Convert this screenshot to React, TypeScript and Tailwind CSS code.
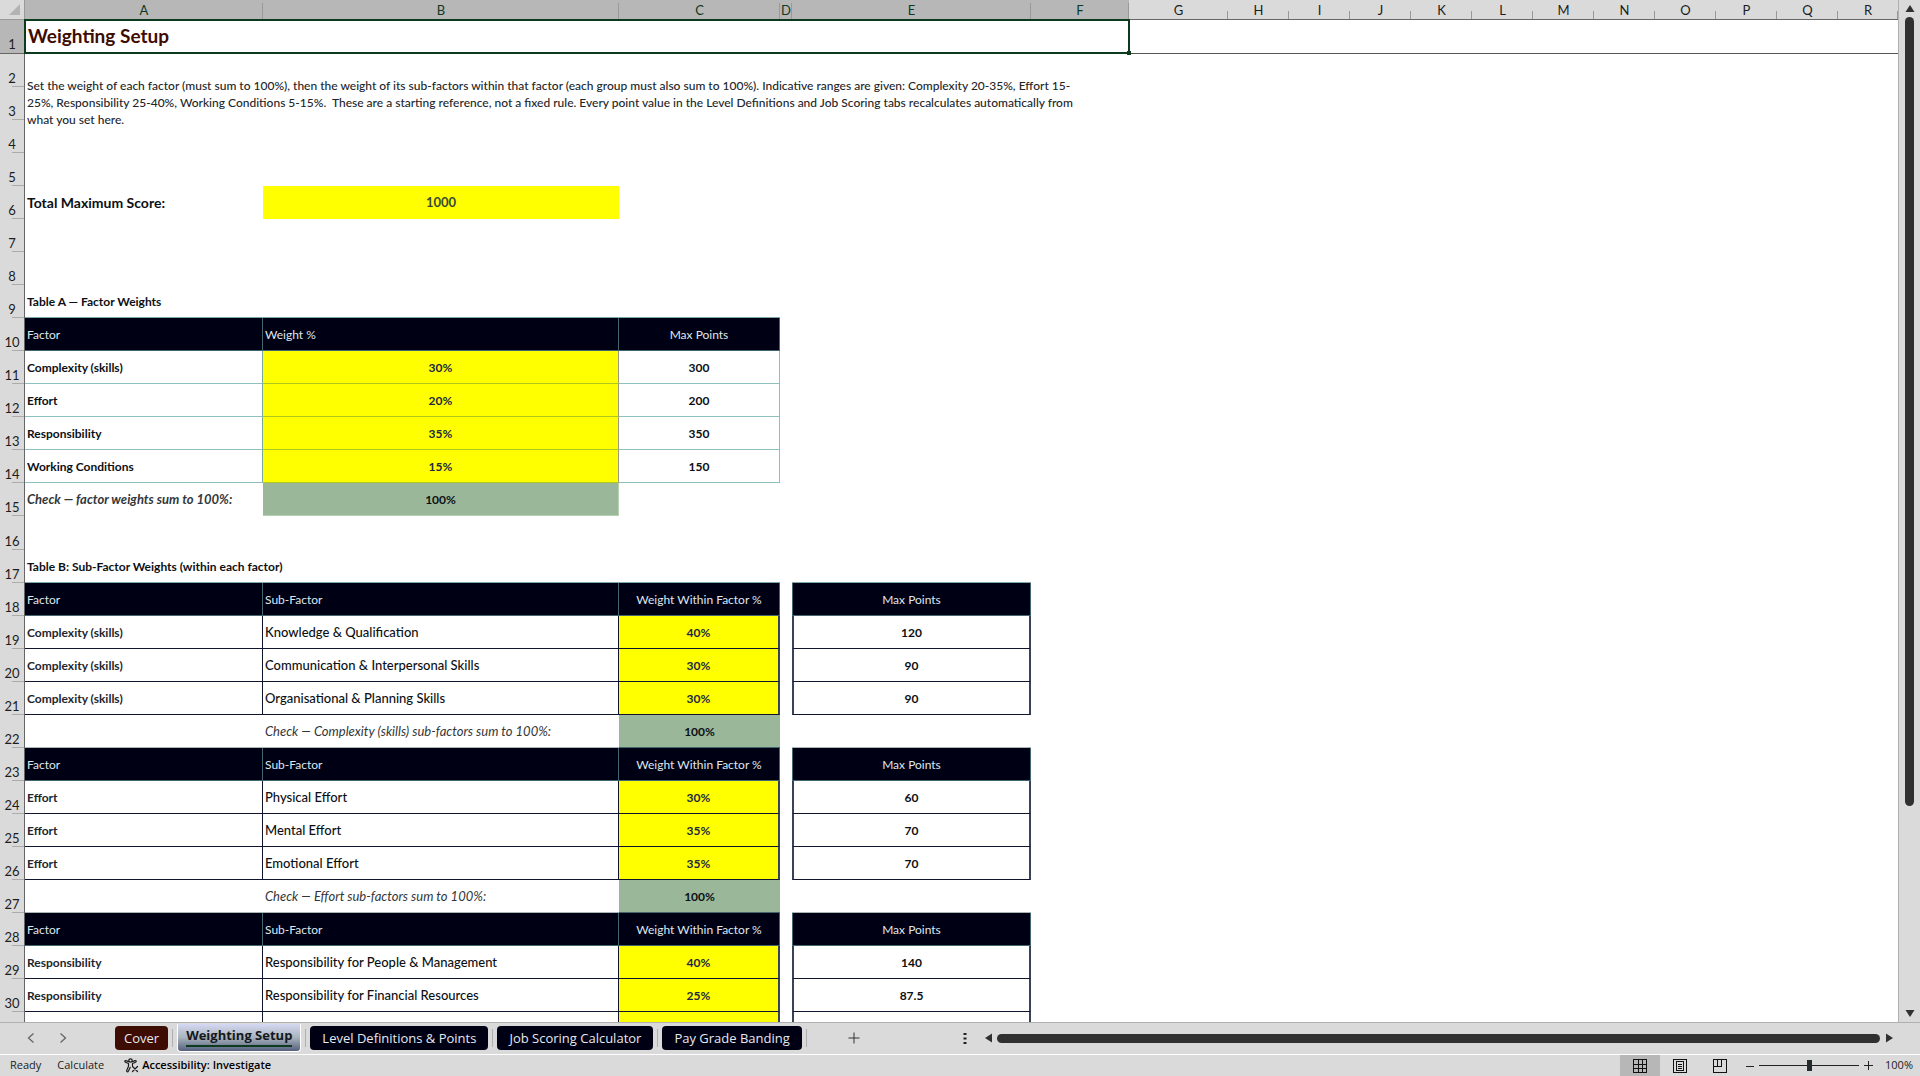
import type { ReactNode } from "react"
import { clsx } from "clsx"

type Row = {
  n?: number
  kind: "empty" | "total" | "caption" | "headA" | "rowA" | "checkA" | "headB" | "rowB" | "checkB"
  a?: string
  b?: string
  c?: string
  e?: string
}

const columns = [
  { name: "A", width: "w-[238px]" },
  { name: "B", width: "w-[356px]" },
  { name: "C", width: "w-[161px]" },
  { name: "D", width: "w-3" },
  { name: "E", width: "w-[239px]" },
  { name: "F", width: "w-[98px]" },
  { name: "G", width: "w-[99px]" },
  { name: "H", width: "w-[61px]" },
  { name: "I", width: "w-[61px]" },
  { name: "J", width: "w-[61px]" },
  { name: "K", width: "w-[61px]" },
  { name: "L", width: "w-[61px]" },
  { name: "M", width: "w-[61px]" },
  { name: "N", width: "w-[61px]" },
  { name: "O", width: "w-[61px]" },
  { name: "P", width: "w-[61px]" },
  { name: "Q", width: "w-[61px]" },
  { name: "R", width: "w-auto" },
]

const rows: Row[] = [
  { n: 5, kind: "empty" },
  { n: 6, kind: "total", a: "Total Maximum Score:", b: "1000" },
  { n: 7, kind: "empty" },
  { n: 8, kind: "empty" },
  { n: 9, kind: "caption", a: "Table A — Factor Weights" },
  { n: 10, kind: "headA", a: "Factor", b: "Weight %", c: "Max Points" },
  { n: 11, kind: "rowA", a: "Complexity (skills)", b: "30%", c: "300" },
  { n: 12, kind: "rowA", a: "Effort", b: "20%", c: "200" },
  { n: 13, kind: "rowA", a: "Responsibility", b: "35%", c: "350" },
  { n: 14, kind: "rowA", a: "Working Conditions", b: "15%", c: "150" },
  { n: 15, kind: "checkA", a: "Check — factor weights sum to 100%:", b: "100%" },
  { n: 16, kind: "empty" },
  { n: 17, kind: "caption", a: "Table B: Sub-Factor Weights (within each factor)" },
  { n: 18, kind: "headB" },
  { n: 19, kind: "rowB", a: "Complexity (skills)", b: "Knowledge & Qualification", c: "40%", e: "120" },
  { n: 20, kind: "rowB", a: "Complexity (skills)", b: "Communication & Interpersonal Skills", c: "30%", e: "90" },
  { n: 21, kind: "rowB", a: "Complexity (skills)", b: "Organisational & Planning Skills", c: "30%", e: "90" },
  { n: 22, kind: "checkB", b: "Check — Complexity (skills) sub-factors sum to 100%:", c: "100%" },
  { n: 23, kind: "headB" },
  { n: 24, kind: "rowB", a: "Effort", b: "Physical Effort", c: "30%", e: "60" },
  { n: 25, kind: "rowB", a: "Effort", b: "Mental Effort", c: "35%", e: "70" },
  { n: 26, kind: "rowB", a: "Effort", b: "Emotional Effort", c: "35%", e: "70" },
  { n: 27, kind: "checkB", b: "Check — Effort sub-factors sum to 100%:", c: "100%" },
  { n: 28, kind: "headB" },
  { n: 29, kind: "rowB", a: "Responsibility", b: "Responsibility for People & Management", c: "40%", e: "140" },
  { n: 30, kind: "rowB", a: "Responsibility", b: "Responsibility for Financial Resources", c: "25%", e: "87.5" },
  { kind: "rowB" },
]

function RowNumber({ n, selected }: { n?: number; selected?: boolean }) {
  return (
    <th
      scope="row"
      className={clsx(
        "relative border-r border-[#666] p-0 text-center align-bottom text-[13px] leading-[18px] font-normal text-[#1c1c1c]",
        selected ? "border-b bg-[#b7b7b7]" : "bg-[#dadada] after:absolute after:right-0 after:bottom-0 after:h-px after:w-3 after:bg-[#ababab]"
      )}
    >
      {n}
    </th>
  )
}

const head = "border-b border-r border-[#41666e] bg-[#000014] px-0.5 font-normal text-[#dfe7ee]"
const dark = "border-b border-[#10142c]"

function SheetCells({ row }: { row: Row }) {
  switch (row.kind) {
    case "total":
      return (
        <>
          <td className="px-0.5 text-sm font-bold">{row.a}</td>
          <td className="bg-[#ffff00] text-center text-[13px] font-bold text-[#3a4a3a]">{row.b}</td>
        </>
      )
    case "caption":
      return (
        <>
          <td colSpan={3} className="border-b border-[#7fa9a9] px-0.5 font-bold">{row.a}</td>
          <td />
          {row.n === 17 && <td className="border-b border-[#7fa9a9]" />}
        </>
      )
    case "headA":
      return (
        <>
          <td className={clsx(head, "text-left")}>{row.a}</td>
          <td className={clsx(head, "text-left")}>{row.b}</td>
          <td className={clsx(head, "text-center")}>{row.c}</td>
        </>
      )
    case "rowA":
      return (
        <>
          <td className="border-r border-b border-r-[#7aa89a] border-b-[#8fc0c0] px-0.5 font-bold">{row.a}</td>
          <td className="border-r border-b border-r-[#9b9a80] border-b-[#b0c820] bg-[#ffff00] text-center font-bold text-[#1e2840]">{row.b}</td>
          <td className="border-r border-b border-[#8fc0c0] text-center font-bold">{row.c}</td>
        </>
      )
    case "checkA":
      return (
        <>
          <td className="px-0.5 text-[13px] font-bold whitespace-nowrap text-[#33373a] italic">{row.a}</td>
          <td className="border-r border-b border-[#b4d2b0] bg-[#9ab79a] text-center font-bold">{row.b}</td>
        </>
      )
    case "headB":
      return (
        <>
          <td className={clsx(head, "text-left")}>Factor</td>
          <td className={clsx(head, "text-left")}>Sub-Factor</td>
          <td className={clsx(head, "text-center")}>Weight Within Factor %</td>
          <td />
          <td className={clsx(head, "border-l text-center")}>Max Points</td>
        </>
      )
    case "rowB":
      return (
        <>
          <td className={clsx(dark, "border-r px-0.5 font-bold text-[#22262c]")}>{row.a}</td>
          <td className={clsx(dark, "border-r px-0.5 text-[13px] font-medium")}>{row.b}</td>
          <td className={clsx(dark, "border-r-2 border-r-[#3a4258] bg-[#ffff00] text-center font-bold text-[#1e2840]")}>{row.c}</td>
          <td />
          <td className={clsx(dark, "border-x-2 border-x-[#3a4258] text-center font-bold")}>{row.e}</td>
        </>
      )
    case "checkB":
      return (
        <>
          <td className="border-b border-[#a9b5b5]" />
          <td className="border-b border-[#a9b5b5] px-0.5 text-[13px] text-[#33373a] italic">{row.b}</td>
          <td className="border-b border-[#41666e] bg-[#9ab79a] text-center font-bold">{row.c}</td>
          <td />
          <td className="border-b border-[#a9b5b5]" />
        </>
      )
    default:
      return <td />
  }
}

function Sheet() {
  return (
    <table className="w-full table-fixed border-separate border-spacing-0 font-[Lato,sans-serif] text-xs leading-[17px] text-[#0c1014]">
      <colgroup>
        <col className="w-[25px]" />
        {columns.map((col) => (
          <col key={col.name} className={col.width} />
        ))}
      </colgroup>
      <thead>
        <tr className="h-5">
          <td className="relative border-r border-b border-[#999] bg-[#dadada] p-0">
            <svg viewBox="0 0 12 12" className="mr-[3px] ml-auto h-3 w-3" aria-hidden="true">
              <path d="M11 0V11H0Z" fill="#b3b3b3" />
            </svg>
          </td>
          {columns.map((col, i) => (
            <th
              key={col.name}
              scope="col"
              className={clsx(
                "relative border-b p-0 text-[13px] leading-4 font-normal after:absolute after:right-0 after:bottom-0 after:w-px after:bg-[#999]",
                i < 6 ? "border-[#0d3b1e] bg-[#b7b7b7] text-[#10391f] after:h-4" : "border-[#666] bg-[#dadada] text-[#1c1c1c] after:h-2"
              )}
            >
              {col.name}
            </th>
          ))}
        </tr>
      </thead>
      <tbody>
        <tr className="h-[34px]">
          <RowNumber n={1} selected />
          <td colSpan={6} className="relative border-b border-[#555] px-[3px] pt-0 pb-0.5 text-[19px] leading-6 font-bold text-[#3d0c02]">
            Weighting Setup
            <span className="pointer-events-none absolute -inset-px border-2 border-[#0d3b1e]" />
            <span className="absolute -right-0.5 -bottom-0.5 size-1 bg-[#0d3b1e]" />
          </td>
          <td colSpan={12} className="border-b border-[#555]" />
        </tr>
        <tr className="h-[33px]">
          <RowNumber n={2} />
          <td colSpan={6} rowSpan={3} className="px-0.5 pt-0 pb-0.5 font-medium text-[#22262a]">
            <p>Set the weight of each factor (must sum to 100%), then the weight of its sub-factors within that factor (each group must also sum to 100%). Indicative ranges are given: Complexity 20-35%, Effort 15-</p>
            <p>25%, Responsibility 25-40%, Working Conditions 5-15%.&nbsp; These are a starting reference, not a fixed rule. Every point value in the Level Definitions and Job Scoring tabs recalculates automatically from</p>
            <p>what you set here.</p>
          </td>
        </tr>
        <tr className="h-[33px]">
          <RowNumber n={3} />
        </tr>
        <tr className="h-[33px]">
          <RowNumber n={4} />
        </tr>
        {rows.map((row, i) => (
          <tr key={i} className={clsx("[&>td]:py-0", row.n === 16 ? "h-[34px]" : "h-[33px]")}>
            <RowNumber n={row.n} />
            <SheetCells row={row} />
          </tr>
        ))}
      </tbody>
    </table>
  )
}

function Arrow({ d, label, className }: { d: string; label: string; className?: string }) {
  return (
    <button type="button" aria-label={label} className={clsx("shrink-0", className)}>
      <svg viewBox="0 0 10 10" className="size-2.5" fill="#303030">
        <path d={d} />
      </svg>
    </button>
  )
}

function SheetTab({ children, color }: { children: ReactNode; color: string }) {
  return (
    <>
      <button type="button" className={clsx("h-6 rounded text-[13px] leading-6 whitespace-nowrap text-[#e6e9ee]", color)}>
        {children}
      </button>
      <span className="mx-1 h-[18px] w-px bg-[#b0b0b0]" />
    </>
  )
}

function TabBar() {
  return (
    <div className="flex h-8 shrink-0 items-center border-t border-[#b0b0b0] pb-px">
      <div className="flex w-[115px] items-center gap-6 pl-[27px]">
        <button type="button" aria-label="Previous sheet">
          <svg viewBox="0 0 8 10" className="h-2.5 w-2" fill="none" stroke="#666" strokeWidth="1.3">
            <path d="M6.500 .5 1.500 5 6.500 9.500" />
          </svg>
        </button>
        <button type="button" aria-label="Next sheet">
          <svg viewBox="0 0 8 10" className="h-2.5 w-2" fill="none" stroke="#666" strokeWidth="1.3">
            <path d="M1.500 .5 6.500 5 1.500 9.500" />
          </svg>
        </button>
      </div>
      <SheetTab color="bg-[#3d0c02] px-[9px]">Cover</SheetTab>
      <button
        type="button"
        className="h-7 rounded-b border border-t-0 border-white bg-linear-to-b from-[#d5d8f2] via-[#a9b4bd] to-[#56607f] px-2 pb-1 text-[13px] leading-5 font-bold whitespace-nowrap text-[#14181c]"
      >
        <span className="block border-b-2 border-[#0d3b1e]">Weighting Setup</span>
      </button>
      <span className="mx-1 h-[18px] w-px bg-[#b0b0b0]" />
      <SheetTab color="bg-[#000014] px-3">Level Definitions &amp; Points</SheetTab>
      <SheetTab color="bg-[#000014] px-3">Job Scoring Calculator</SheetTab>
      <SheetTab color="bg-[#000014] px-3">Pay Grade Banding</SheetTab>
      <button type="button" aria-label="New sheet" className="ml-[37px]">
        <svg viewBox="0 0 12 12" className="size-3" stroke="#333" strokeWidth="1">
          <path d="M6 .5V11.500M.5 6H11.500" />
        </svg>
      </button>
      <svg viewBox="0 0 4 12" className="ml-[103px] h-3 w-1" fill="#222" aria-hidden="true">
        <path d="M.5 1h3v2h-3zM.5 5.500h3v2h-3zM.5 10h3v2h-3z" />
      </svg>
      <div className="ml-4 flex min-w-0 flex-1 items-center gap-1 pr-[26px]">
        <Arrow label="Scroll left" d="M9 .5V9.500L2 5Z" />
        <div className="h-[9px] flex-1 rounded-full bg-[#303030]" />
        <Arrow label="Scroll right" d="M2 .5V9.500L9 5Z" />
      </div>
    </div>
  )
}

function StatusBar() {
  return (
    <div className="flex h-[22px] shrink-0 items-center border-t border-white pl-2.5 text-[11px] text-[#1c1c1c]">
      <span>Ready</span>
      <span className="ml-4">Calculate</span>
      <button type="button" className="ml-5 flex items-center gap-[3px] font-semibold whitespace-nowrap text-black">
        <svg viewBox="0 0 15 15" className="size-[15px]" fill="none" stroke="#1c1c1c" strokeWidth="1.2" strokeLinecap="round" strokeLinejoin="round">
          <circle cx="6.500" cy="2.500" r="1.700" />
          <path d="M4.800 3.600 1.800 2.600C.7 2.300.5 3.800 1.400 4.200L4.500 5.500V8.200L2.700 12.600C2.400 13.800 3.800 14.200 4.300 13.200L6.300 9.300M8.200 3.600l3-1C12.300 2.300 12.600 3.800 11.600 4.200L8.500 5.500V7.500M8.500 8.500l5 5M13.500 8.500l-5 5" />
        </svg>
        Accessibility: Investigate
      </button>
      <div className="ml-auto flex h-full items-center">
        <button type="button" aria-label="Normal view" className="flex h-full w-10 items-center justify-center bg-[#b7b7b7]">
          <svg viewBox="0 0 14 14" className="size-3.5" fill="none" stroke="#111" shapeRendering="crispEdges">
            <path d="M.5.5h13v13H.5zM5 .5v13M9 .5v13M.5 5h13M.5 9h13" />
          </svg>
        </button>
        <button type="button" aria-label="Page layout view" className="flex h-full w-10 items-center justify-center">
          <svg viewBox="0 0 14 14" className="size-3.5" fill="none" stroke="#111" shapeRendering="crispEdges">
            <path d="M.5.5h13v13H.5zM3.500 2.500h7v9h-7zM5 5h4M5 7h4M5 9h4" />
          </svg>
        </button>
        <button type="button" aria-label="Page break preview" className="flex h-full w-10 items-center justify-center">
          <svg viewBox="0 0 14 14" className="size-3.5" fill="none" stroke="#111" shapeRendering="crispEdges">
            <path d="M.5.5h13v13H.5zM.5 7.500h8V.5M4.500.5v7" />
          </svg>
        </button>
        <button type="button" aria-label="Zoom out" className="ml-1.5">
          <svg viewBox="0 0 8 8" className="size-2" stroke="#222">
            <path d="M0 4.500H8" />
          </svg>
        </button>
        <input
          type="range"
          aria-label="Zoom"
          min={0}
          max={100}
          defaultValue={50}
          className="mx-[5px] h-[11px] w-[100px] appearance-none bg-transparent [&::-webkit-slider-runnable-track]:h-px [&::-webkit-slider-runnable-track]:bg-[#222] [&::-webkit-slider-thumb]:-mt-[5px] [&::-webkit-slider-thumb]:h-[11px] [&::-webkit-slider-thumb]:w-[5px] [&::-webkit-slider-thumb]:appearance-none [&::-webkit-slider-thumb]:bg-[#262c2e]"
        />
        <button type="button" aria-label="Zoom in">
          <svg viewBox="0 0 9 9" className="size-[9px]" stroke="#222">
            <path d="M0 4.500H9M4.500 0V9" />
          </svg>
        </button>
        <span className="w-[47px] pr-[7px] text-right">100%</span>
      </div>
    </div>
  )
}

export default function App() {
  return (
    <div className="flex h-screen flex-col overflow-hidden bg-[#dadada] font-['Open_Sans',sans-serif]">
      <div className="flex min-h-0 flex-1">
        <main className="min-w-0 flex-1 overflow-hidden border-r border-[#b0b0b0] bg-white">
          <Sheet />
        </main>
        <div className="flex w-[21px] shrink-0 flex-col items-center justify-between py-[3px]">
          <div className="flex h-3/4 flex-col items-center gap-1 grow-0 basis-[79%]">
            <Arrow label="Scroll up" d="M5 2 9.500 9H.5Z" className="h-2.5" />
            <div className="w-[9px] flex-1 rounded-full bg-[#303030]" />
          </div>
          <Arrow label="Scroll down" d="M.5 1H9.500L5 8Z" className="h-2.5" />
        </div>
      </div>
      <TabBar />
      <StatusBar />
    </div>
  )
}
